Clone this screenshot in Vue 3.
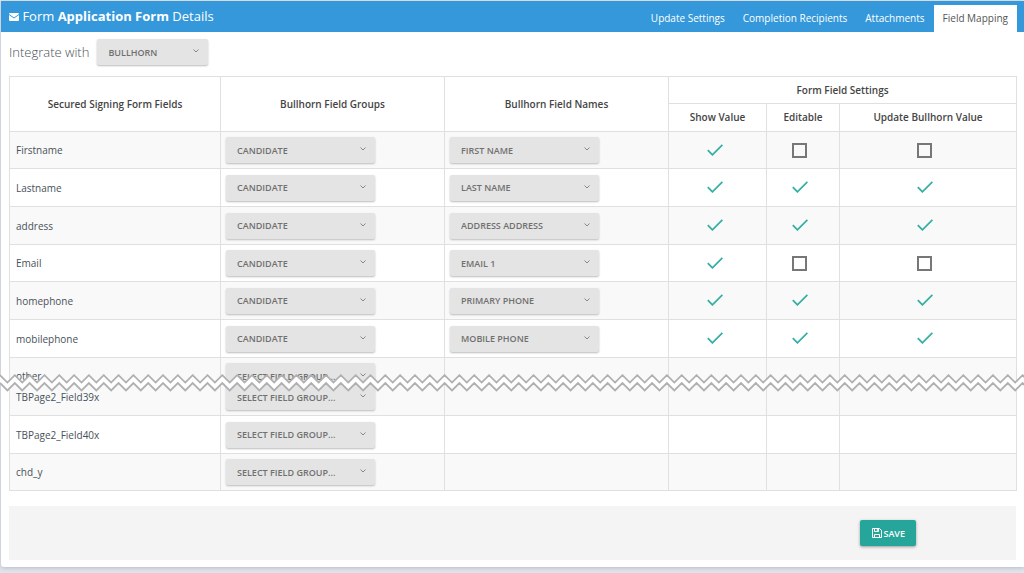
<script setup>
import { reactive, ref } from 'vue'

const tabs = ['Update Settings', 'Completion Recipients', 'Attachments', 'Field Mapping']
const activeTab = ref('Field Mapping')
const integration = ref('BULLHORN')

const placeholder = 'SELECT FIELD GROUP...'
const settings = [
  { key: 'show', label: 'Show Value' },
  { key: 'edit', label: 'Editable' },
  { key: 'update', label: 'Update Bullhorn Value' },
]

const rows = reactive([
  { field: 'Firstname', group: 'CANDIDATE', name: 'FIRST NAME', show: true, edit: false, update: false },
  { field: 'Lastname', group: 'CANDIDATE', name: 'LAST NAME', show: true, edit: true, update: true },
  { field: 'address', group: 'CANDIDATE', name: 'ADDRESS ADDRESS', show: true, edit: true, update: true },
  { field: 'Email', group: 'CANDIDATE', name: 'EMAIL 1', show: true, edit: false, update: false },
  { field: 'homephone', group: 'CANDIDATE', name: 'PRIMARY PHONE', show: true, edit: true, update: true },
  { field: 'mobilephone', group: 'CANDIDATE', name: 'MOBILE PHONE', show: true, edit: true, update: true },
  { field: 'other', group: placeholder, part: 'upper' },
  { field: 'TBPage2_Field39x', group: placeholder, part: 'lower' },
  { field: 'TBPage2_Field40x', group: placeholder },
  { field: 'chd_y', group: placeholder, shade: true },
])

// Torn-paper break: two parallel zigzag lines with white between them.
const half = 7.41
const count = 300
const line = (top) =>
  Array.from({ length: count }, (_, i) => `${(i * half).toFixed(2)},${top + (i % 2 ? 7.4 : 0)}`)
const upperLine = line(1.2)
const lowerLine = line(9)
const band = [...upperLine, ...[...lowerLine].reverse()].join(' ')
</script>

<template>
  <main class="card">
    <header class="bar">
      <h1 class="title">
        <svg class="mail" viewBox="0 0 10 8" aria-hidden="true">
          <path d="M1 0h8q1 0 1 1L5 4.4 0 1q0-1 1-1z" fill="#fff" />
          <path d="M0 2.1 5 5.5l5-3.4V7q0 1-1 1H1q-1 0-1-1z" fill="#fff" />
        </svg>
        Form <b>Application Form</b> Details
      </h1>
      <nav class="tabs">
        <a
          v-for="t in tabs"
          :key="t"
          href="#"
          class="tab"
          :class="{ active: t === activeTab }"
          @click.prevent="activeTab = t"
        >{{ t }}</a>
      </nav>
    </header>

    <div class="integrate">
      <label for="integration">Integrate with</label>
      <span class="pick short">
        <select id="integration" v-model="integration">
          <option>BULLHORN</option>
        </select>
        <svg class="chev" viewBox="0 0 6 4" aria-hidden="true"><path d="M.5.5 3 3 5.5.5" /></svg>
      </span>
    </div>

    <div class="sheet">
      <table>
        <colgroup>
          <col class="c-field" /><col class="c-group" /><col class="c-group" />
          <col class="c-show" /><col class="c-edit" /><col class="c-update" />
        </colgroup>
        <thead>
          <tr class="h1">
            <th rowspan="2">Secured Signing Form Fields</th>
            <th rowspan="2">Bullhorn Field Groups</th>
            <th rowspan="2">Bullhorn Field Names</th>
            <th colspan="3">Form Field Settings</th>
          </tr>
          <tr class="h2">
            <th v-for="s in settings" :key="s.key">{{ s.label }}</th>
          </tr>
        </thead>
        <tbody>
          <tr v-for="r in rows" :key="r.field" :class="[r.part, { shade: r.shade }]">
            <td><div class="cell">{{ r.field }}</div></td>
            <td>
              <div class="cell">
                <span class="pick">
                  <select v-model="r.group" :aria-label="r.field + ' field group'">
                    <option>CANDIDATE</option>
                    <option>{{ placeholder }}</option>
                  </select>
                  <svg class="chev" viewBox="0 0 6 4" aria-hidden="true"><path d="M.5.5 3 3 5.5.5" /></svg>
                </span>
              </div>
            </td>
            <td>
              <div v-if="r.name" class="cell">
                <span class="pick">
                  <select v-model="r.name" :aria-label="r.field + ' field name'">
                    <option>{{ r.name }}</option>
                  </select>
                  <svg class="chev" viewBox="0 0 6 4" aria-hidden="true"><path d="M.5.5 3 3 5.5.5" /></svg>
                </span>
              </div>
            </td>
            <td v-for="s in settings" :key="s.key" class="mark">
              <label v-if="r.name" class="check">
                <input v-model="r[s.key]" type="checkbox" :aria-label="r.field + ' ' + s.label" />
                <svg viewBox="0 0 16 12" aria-hidden="true"><path d="M.8 6.2 5.4 10.8 15.4.8" /></svg>
              </label>
            </td>
          </tr>
        </tbody>
      </table>
      <svg class="tear" aria-hidden="true">
        <polygon :points="band" fill="#fff" />
        <polyline :points="upperLine.join(' ')" />
        <polyline :points="lowerLine.join(' ')" />
      </svg>
    </div>

    <footer class="actions">
      <button type="button" class="save">
        <svg viewBox="0 0 10 10" aria-hidden="true">
          <path d="M.5.5h7l2 2v7h-9zM2.5.5v3h4v-3M2.5 9.5v-3h5v3M5.3 1v2" />
        </svg>
        SAVE
      </button>
    </footer>
  </main>
</template>

<style>
body {
  background: #e0e4ec;
}
</style>

<style scoped>
.card {
  margin: 1px 0 6px 1px;
  padding-bottom: 7px;
  background: #fff;
  border-radius: 0 0 0 3px;
  box-shadow: 0 1px 4px #b4bac8;
  color: #48515a;
  font-family: "Open Sans", "Noto Sans", sans-serif;
  font-size: 10px;
}
.bar {
  display: flex;
  justify-content: space-between;
  align-items: flex-end;
  height: 31px;
  padding: 0 7px 0 8px;
  background: #3498db;
  color: #fff;
}
.title {
  margin: 0;
  font-size: 13px;
  font-weight: 400;
  line-height: 31px;
}
.mail {
  width: 10px;
  height: 8px;
}
.tabs {
  display: flex;
}
.tab {
  padding: 0 9px;
  color: #fff;
  line-height: 27px;
  text-decoration: none;
}
.tab.active {
  background: #fff;
  color: #555;
}
.integrate {
  display: flex;
  align-items: center;
  gap: 8px;
  height: 40px;
  padding: 0 8px;
  font-size: 13px;
  font-weight: 300;
}
.pick {
  position: relative;
  display: inline-block;
  flex: none;
  width: 149px;
  height: 26px;
}
.pick.short {
  width: 111px;
}
.pick select {
  appearance: none;
  display: block;
  width: 100%;
  height: 100%;
  margin: 0;
  padding: 0 11px;
  border: 0;
  border-radius: 2px;
  background: #e4e4e4;
  box-shadow: 0 1px 2px #bbb;
  color: #707070;
  font: 600 9px "Open Sans", "Noto Sans", sans-serif;
}
.chev {
  position: absolute;
  top: 10px;
  right: 9px;
  width: 6px;
  height: 4px;
  fill: none;
  stroke: #888;
  pointer-events: none;
}
.sheet {
  position: relative;
  padding: 4px 8px 0;
}
table {
  width: 100%;
  table-layout: fixed;
  border-collapse: collapse;
}
.c-field {
  width: 211px;
}
.c-group {
  width: 224px;
}
.c-show {
  width: 98px;
}
.c-edit {
  width: 73px;
}
.c-update {
  width: 177px;
}
th,
td {
  padding: 0;
  border: 1px solid #e0e0e0;
}
th {
  padding-bottom: 1px;
  color: #444;
  font-weight: 600;
}
.h1 {
  height: 27px;
}
.h2 {
  height: 28px;
}
tbody tr {
  height: 38px;
}
tbody tr:nth-child(3n + 1) {
  height: 37px;
}
tbody tr:nth-child(-n + 7):nth-child(odd),
tbody tr.lower,
tbody tr.shade {
  background: #f9f9f9;
}
.cell {
  display: flex;
  align-items: center;
  height: 36px;
  padding: 0 5px;
}
td:first-child .cell {
  padding: 0 6px;
}
tbody tr.upper {
  height: 26px;
}
tbody tr.lower {
  height: 32px;
}
.upper td {
  border-bottom: 0;
  vertical-align: top;
}
.lower td {
  border-top: 0;
  vertical-align: bottom;
}
.upper .cell,
.lower .cell {
  overflow: hidden;
  line-height: 36px;
}
.upper .cell {
  align-items: flex-start;
  height: 25px;
}
.lower .cell {
  align-items: flex-end;
  height: 31px;
}
.upper .pick {
  margin-top: 5px;
}
.lower .pick {
  margin-bottom: 5px;
}
.mark {
  padding-right: 7px;
  text-align: center;
}
.check {
  position: relative;
  display: inline-block;
  width: 15px;
  height: 15px;
  vertical-align: middle;
}
.check input {
  appearance: none;
  display: block;
  width: 15px;
  height: 15px;
  margin: 0;
  border: 2px solid #777;
}
.check input:checked {
  border-color: transparent;
}
.check svg {
  position: absolute;
  top: 1px;
  left: 0;
  display: none;
  width: 16px;
  height: 12px;
  fill: none;
  stroke: #35afa3;
  stroke-width: 1.8;
}
.check input:checked + svg {
  display: block;
}
.tear {
  position: absolute;
  top: 302px;
  left: -1px;
  width: calc(100% + 1px);
  height: 18px;
}
.tear polyline {
  fill: none;
  stroke: #b0b0b0;
  stroke-width: 1.8;
}
.actions {
  display: flex;
  justify-content: flex-end;
  margin: 15px 8px 0;
  padding: 14px 100px;
  background: #f4f4f4;
}
.save {
  display: flex;
  align-items: center;
  gap: 1px;
  height: 26px;
  padding: 0 11px 0 12px;
  border: 0;
  border-radius: 2px;
  background: #26a69a;
  box-shadow: 0 1px 3px #999;
  color: #fff;
  font: 600 9px "Open Sans", "Noto Sans", sans-serif;
}
.save svg {
  width: 10px;
  height: 10px;
  fill: none;
  stroke: #fff;
}
</style>
